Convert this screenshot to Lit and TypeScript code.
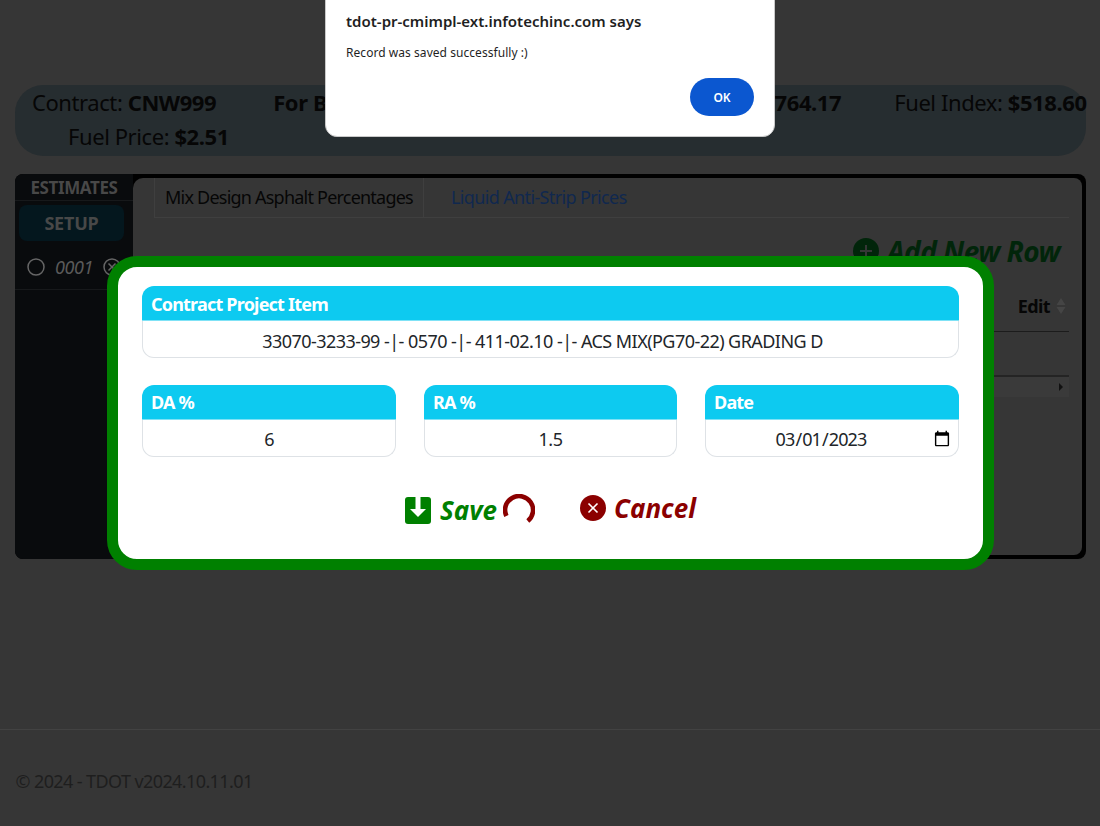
import { LitElement, html, css } from "lit";
import { customElement } from "lit/decorators.js";

@customElement("app-root")
export class AppRoot extends LitElement {
  static styles = css`
    :host { display: block; position: relative; width: 1100px; height: 826px; overflow: hidden; background: #363636; font-family: "Noto Sans", sans-serif; color: #060606; }
    .page { display: flex; flex-direction: column; padding: 85px 14px 0 15px; }
    .banner { height: 71px; box-sizing: border-box; border-radius: 28px; background: #262d30; font-size: 22px; line-height: 33px; letter-spacing: -0.42px; white-space: nowrap; padding-top: 1px; }
    .banner b { font-weight: 700; }
    .b-row { display: flex; padding-left: 17px; }
    .b-row.two { padding-left: 53px; margin-top: 1px; }
    .b-for { margin-left: 57px; width: 568px; margin-right: 53px; display: flex; justify-content: space-between; flex: none; }
    .card { margin-top: 18px; height: 385px; display: flex; background: #000; border-radius: 8px; box-sizing: border-box; padding: 4px 4px 4px 0; }
    .side { width: 118px; flex: none; background: #090b0d; margin: -4px 0 -4px 0; border-radius: 8px 0 0 8px; color: #484848; }
    .est { font-size: 17px; font-weight: 700; text-align: center; line-height: 22px; padding-top: 3px; height: 23px; border-bottom: 1px solid #17191b; letter-spacing: -.4px; }
    .setup { margin: 4px 9px 0 4px; height: 36px; line-height: 36px; border-radius: 8px; background: #04171e; text-align: center; font-weight: 700; font-size: 18px; letter-spacing: -.2px; }
    .sitem { display: flex; align-items: center; height: 49px; box-sizing: border-box; padding: 3px 0 0 12px; border-bottom: 1px solid #17191b; color: #5a5a5a; font-style: italic; font-size: 18px; gap: 10px; letter-spacing: -.4px; }
    .sitem svg { flex: none; }
    .panel { flex: 1; background: #363636; border-radius: 10px 8px 8px 0; padding: 0 13px 0 21px; display: flex; flex-direction: column; }
    .tabs { display: flex; height: 39px; border-bottom: 1px solid #3f3f3f; font-size: 18px; letter-spacing: -.78px; line-height: 39px; }
    .tab { padding: 0 10px; border: 1px solid #3f3f3f; border-width: 0 1px; }
    .tab.off { border: 0; color: #10284f; padding-left: 27px; letter-spacing: -.63px; }
    .add { display: flex; justify-content: flex-end; align-items: center; gap: 8px; height: 66px; padding-right: 9px; color: #01250a; font-size: 28px; font-weight: 700; font-style: italic; letter-spacing: -.55px; }
    .thead { display: flex; justify-content: flex-end; align-items: center; gap: 6px; height: 48px; box-sizing: border-box; padding: 0 3px 3px 0; border-bottom: 1px solid #1c1c1c; font-size: 18px; font-weight: 700; letter-spacing: -.6px; }
    .rowline { height: 45px; border-bottom: 2px solid #242424; box-sizing: border-box; }
    .hscroll { height: 20px; background: #3a3a3a; display: flex; justify-content: flex-end; align-items: center; padding-right: 6px; }
    .arrow { width: 0; height: 0; border-left: 4px solid #111; border-top: 4px solid transparent; border-bottom: 4px solid transparent; }
    footer { margin-top: 170px; margin-left: -15px; margin-right: -14px; border-top: 1px solid #424242; padding: 41px 0 0 15.5px; font-size: 18px; line-height: 20px; letter-spacing: -.6px; color: #1e1e1e; }

    .modal { position: absolute; left: 107px; top: 256px; width: 887px; height: 314px; box-sizing: border-box; border: 11px solid #008000; border-radius: 30px; background: #fff; padding: 19px 24px 0; color: #212529; }
    .hd { height: 35px; box-sizing: border-box; background: #0dcaf0; border-radius: 12px 12px 0 0; color: #fff; font-weight: 700; font-size: 18px; line-height: 36px; padding-left: 9px; letter-spacing: -.8px; border-bottom: 1px solid #7fe2f6; }
    .cols .hd { line-height: 34px; }
    .fld input, .bd { display: block; width: 100%; height: 37px; box-sizing: border-box; border: 1px solid #dee2e6; border-top: 0; border-radius: 0 0 12px 12px; background: #fff; text-align: center; font: 18px/37px "Noto Sans", sans-serif; letter-spacing: -.55px; color: #212529; outline: none; padding: 2px 5px 0; white-space: nowrap; }
    .bd { padding-right: 21px; }
    .fld input[type="date"] { letter-spacing: -.9px; }
    .cols { display: grid; grid-template-columns: 254px 253px 254px; column-gap: 28px; margin-top: 27px; }
    .actions { display: flex; align-items: flex-start; justify-content: center; margin-top: 31px; font-size: 26px; font-weight: 700; font-style: italic; }
    .save { display: flex; align-items: center; gap: 9px; color: #008000; padding-top: 4px; }
    .spin { margin: -1px 0 0 -3px; display: block; }
    .cancel { display: flex; align-items: center; gap: 8px; color: #8b0000; margin-left: 45px; padding-top: 2px; }

    .dialog { position: absolute; left: 325px; top: -20px; width: 450px; height: 157px; box-sizing: border-box; background: #fff; border: 1px solid #c9c9c9; border-radius: 12px; padding: 30px 20px 0; color: #1f1f1f; }
    .dt { font-size: 15px; font-weight: 600; line-height: 20px; }
    .dm { font-size: 12px; line-height: 16px; margin-top: 14px; letter-spacing: .05px; }
    .ok { position: absolute; right: 20px; bottom: 20px; width: 64px; height: 38px; border-radius: 19px; border: 0; background: #0b57d0; color: #fff; font: 600 12px "Noto Sans", sans-serif; }
  `;

  render() {
    return html`
      <div class="page">
        <div class="banner">
          <div class="b-row"><span>Contract: <b>CNW999</b></span><span class="b-for"><b>For Bid</b><b>$1,764.17</b></span><span>Fuel Index: <b>$518.60</b></span></div>
          <div class="b-row two"><span>Fuel Price: <b>$2.51</b></span></div>
        </div>
        <div class="card">
          <div class="side">
            <div class="est">ESTIMATES</div>
            <div class="setup">SETUP</div>
            <div class="sitem">
              <svg width="18" height="18" viewBox="0 0 18 18"><circle cx="9" cy="9" r="8" fill="none" stroke="#666" stroke-width="1.5"/></svg>
              <span>0001</span>
              <svg width="18" height="18" viewBox="0 0 18 18" fill="none" stroke="#666" stroke-width="1.5"><circle cx="9" cy="9" r="8"/><path d="M5.5 5.5l7 7M12.5 5.5l-7 7"/></svg>
            </div>
          </div>
          <div class="panel">
            <div class="tabs"><div class="tab">Mix Design Asphalt Percentages</div><div class="tab off">Liquid Anti-Strip Prices</div></div>
            <div class="add">
              <svg width="26" height="26" viewBox="0 0 26 26"><circle cx="13" cy="13" r="13" fill="#01250a"/><path d="M13 7v12M7 13h12" stroke="#363636" stroke-width="2"/></svg>
              <span>Add New Row</span>
            </div>
            <div class="thead"><span>Edit</span>
              <svg width="10" height="18" viewBox="0 0 10 18"><path d="M5 1l4.5 7h-9zM5 17l4.5-7h-9z" fill="#454545"/></svg>
            </div>
            <div class="rowline"></div>
            <div class="hscroll"><div class="arrow"></div></div>
          </div>
        </div>
        <footer>© 2024 - TDOT v2024.10.11.01</footer>
      </div>

      <div class="modal">
        <div class="fld">
          <div class="hd">Contract Project Item</div>
          <div class="bd">33070-3233-99 -|- 0570 -|- 411-02.10 -|- ACS MIX(PG70-22) GRADING D</div>
        </div>
        <div class="cols">
          <div class="fld"><div class="hd">DA %</div><input type="text" value="6" /></div>
          <div class="fld"><div class="hd">RA %</div><input type="text" value="1.5" /></div>
          <div class="fld"><div class="hd">Date</div><input type="date" value="2023-03-01" /></div>
        </div>
        <div class="actions">
          <div class="save">
            <svg width="26" height="27" viewBox="0 0 26 27"><rect width="26" height="27" rx="3" fill="#008000"/><path d="M10.5 0h5v12h5.5l-8 8-8-8h5.5z" fill="#fff"/></svg>
            <span>Save</span>
            <svg class="spin" width="32" height="32" viewBox="0 0 32 32"><path d="M3.4 22A14 14 0 1 1 24.8 27" fill="none" stroke="#8b0000" stroke-width="4.6"/></svg>
          </div>
          <div class="cancel">
            <svg width="26" height="26" viewBox="0 0 26 26"><circle cx="13" cy="13" r="13" fill="#8b0000"/><path d="M8.5 8.5l9 9M17.5 8.5l-9 9" stroke="#fff" stroke-width="1.6"/></svg>
            <span>Cancel</span>
          </div>
        </div>
      </div>

      <div class="dialog">
        <div class="dt">tdot-pr-cmimpl-ext.infotechinc.com says</div>
        <div class="dm">Record was saved successfully :)</div>
        <button class="ok">OK</button>
      </div>
    `;
  }
}
